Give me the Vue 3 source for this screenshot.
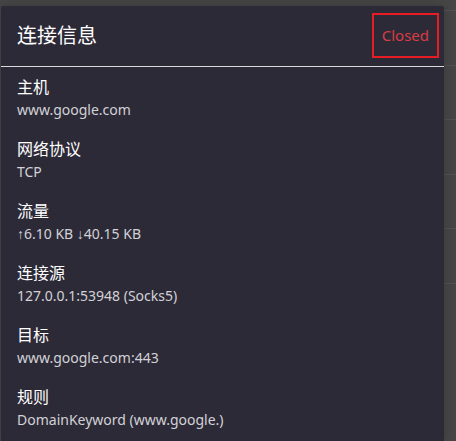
<script setup>
const items = [
  { label: '主机', value: 'www.google.com' },
  { label: '网络协议', value: 'TCP' },
  { label: '流量', value: '↑6.10 KB ↓40.15 KB' },
  { label: '连接源', value: '127.0.0.1:53948 (Socks5)' },
  { label: '目标', value: 'www.google.com:443' },
  { label: '规则', value: 'DomainKeyword (www.google.)' },
]
</script>

<template>
  <div class="page">
    <div class="rows" aria-hidden="true">
      <i v-for="n in 6" :key="n"></i>
    </div>
    <section class="panel">
      <header class="head">
        <h1>连接信息</h1>
        <span class="status">Closed</span>
      </header>
      <dl class="list">
        <div v-for="item in items" :key="item.label">
          <dt>{{ item.label }}</dt>
          <dd>{{ item.value }}</dd>
        </div>
      </dl>
    </section>
  </div>
</template>

<style>
body {
  margin: 0;
  background: #454545;
}
</style>

<style scoped>
.page {
  position: relative;
  box-sizing: border-box;
  min-height: 100vh;
  padding: 6px 12px 0 1px;
  display: flex;
  background: #464646;
  overflow: hidden;
  font-family: 'Noto Sans', 'Liberation Sans', 'Noto Sans CJK SC', sans-serif;
}
.rows {
  position: absolute;
  inset: 10px 0 auto 50%;
  height: 274px;
  display: flex;
  flex-direction: column;
  justify-content: space-between;
}
.rows i {
  height: 1px;
  background: #525252;
}
.panel {
  position: relative;
  flex: 1;
  min-width: 0;
  background: #2d2a38;
  border-radius: 2px 2px 0 0;
  box-shadow: 0 0 12px rgba(0, 0, 0, 0.2);
}
.head {
  display: flex;
  align-items: center;
  justify-content: space-between;
  padding: 7px 5px 8px 16px;
  border-bottom: 1px solid #d8d8da;
}
h1 {
  margin: 0;
  font-size: 20px;
  line-height: 30px;
  font-weight: 400;
  color: #fff;
}
.status {
  padding: 9px 8px;
  border: 2px solid #e81c24;
  font-size: 15px;
  line-height: 23px;
  color: #d93c44;
}
.list {
  margin: 0;
  padding: 8px 16px 0;
  display: grid;
  gap: 16px;
}
dt {
  font-size: 16px;
  line-height: 24px;
  font-weight: 400;
  color: #fff;
}
dd {
  margin: 0;
  font-size: 14px;
  line-height: 22px;
  color: #d2d2d6;
}
</style>
